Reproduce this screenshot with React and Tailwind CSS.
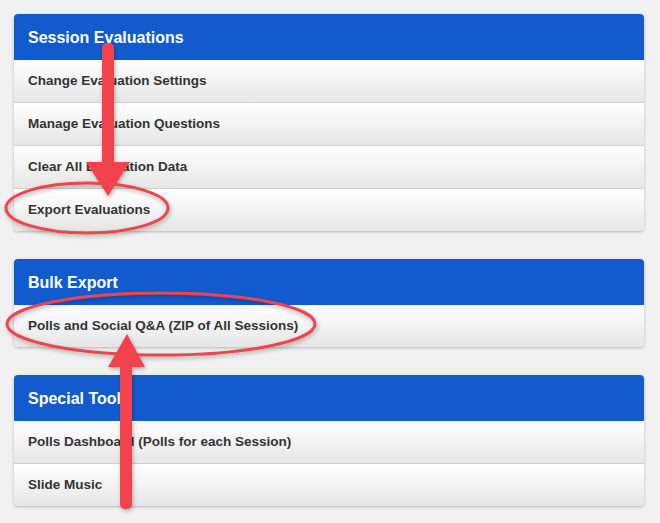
import React from "react";

const sections = [
  {
    title: "Session Evaluations",
    items: [
      "Change Evaluation Settings",
      "Manage Evaluation Questions",
      "Clear All Evaluation Data",
      "Export Evaluations",
    ],
  },
  {
    title: "Bulk Export",
    items: ["Polls and Social Q&A (ZIP of All Sessions)"],
  },
  {
    title: "Special Tools",
    items: ["Polls Dashboard (Polls for each Session)", "Slide Music"],
  },
];

function Panel({ title, items }) {
  return (
    <div className="w-[630px] rounded-[4px] overflow-hidden bg-white shadow-[0_1px_3px_rgba(0,0,0,0.25)]">
      <div className="h-[46px] bg-[#115bcf] flex items-center pl-[14px] pt-[1px] text-white font-bold text-[16px]">
        {title}
      </div>
      {items.map((item, i) => (
        <div
          key={item}
          className={
            "flex items-center px-[14px] text-[13.5px] font-bold text-[#333] bg-gradient-to-b from-white to-[#e6e6e6] " +
            (i < items.length - 1 ? "h-[43px] border-b border-[#cfcfcf]" : "h-[42px]")
          }
        >
          {item}
        </div>
      ))}
    </div>
  );
}

function Annotations() {
  const red = "#f2434b";
  return (
    <svg
      className="absolute left-0 top-0 pointer-events-none"
      width="660"
      height="523"
      viewBox="0 0 660 523"
    >
      <defs>
        <filter id="sh" x="-50%" y="-50%" width="200%" height="200%">
          <feDropShadow dx="1" dy="2" stdDeviation="2" floodColor="#000" floodOpacity="0.3" />
        </filter>
      </defs>
      <g filter="url(#sh)">
        <ellipse cx="87" cy="208" rx="81" ry="25" fill="none" stroke="#ec454c" strokeWidth="3" />
        <ellipse cx="161" cy="324" rx="154" ry="31" fill="none" stroke="#ec454c" strokeWidth="3" />
        <rect x="102" y="43" width="12" height="124" rx="5" fill={red} />
        <polygon points="86,162 130,162 108,196" fill={red} />
        <rect x="120" y="360" width="12" height="149" rx="5" fill={red} />
        <polygon points="108,367 145,367 127,334" fill={red} />
      </g>
    </svg>
  );
}

export default function App() {
  return (
    <div
      className="relative w-[660px] h-[523px] bg-[#f1f1f1] pt-[14px] pl-[14px] flex flex-col gap-[28px]"
      style={{ fontFamily: '"Liberation Sans", Arial, sans-serif' }}
    >
      {sections.map((s) => (
        <Panel key={s.title} title={s.title} items={s.items} />
      ))}
      <Annotations />
    </div>
  );
}
